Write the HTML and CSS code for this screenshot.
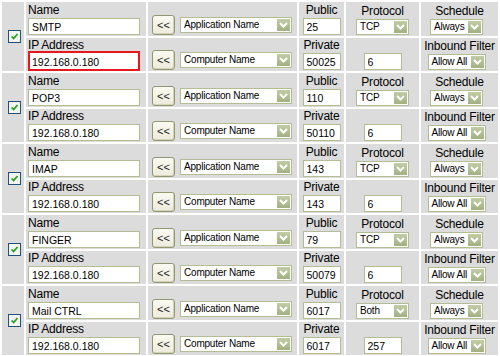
FILE: index.html
```html
<!DOCTYPE html>
<html lang="en">

<head>
    <title>Virtual Server List</title>
    <meta charset="UTF-8">
    <link rel="stylesheet" href="styles.css">
</head>

<body>
    <table class="rules">
        <colgroup>
            <col class="c-chk">
            <col class="c-name">
            <col class="c-pick">
            <col class="c-port">
            <col class="c-proto">
            <col class="c-sched">
        </colgroup>

        <!-- rule 1 -->
        <tr class="top">
            <td rowspan="2" class="chk-cell"><span class="chk"><svg viewBox="0 0 13 13"><path d="M3 6.5 L5.5 9 L10 3.5" /></svg></span></td>
            <td><span class="lbl">Name</span><input class="txt long" type="text" value="SMTP"></td>
            <td class="pick"><button type="button" class="copy">&lt;&lt;</button><span class="sel wide"><span class="sel-text">Application Name</span><span class="arrow"><svg viewBox="0 0 13 12"><path d="M3 4 L6.5 7.5 L10 4" /></svg></span></span></td>
            <td class="mid"><span class="lbl">Public</span><input class="txt port" type="text" value="25"></td>
            <td class="mid"><span class="lbl">Protocol</span><span class="sel small"><span class="sel-text">TCP</span><span class="arrow"><svg viewBox="0 0 13 12"><path d="M3 4 L6.5 7.5 L10 4" /></svg></span></span></td>
            <td class="mid sched"><span class="lbl">Schedule</span><span class="sel small"><span class="sel-text">Always</span><span class="arrow"><svg viewBox="0 0 13 12"><path d="M3 4 L6.5 7.5 L10 4" /></svg></span></span></td>
        </tr>
        <tr class="bottom">
            <td><span class="lbl">IP Address</span><input class="txt long marked" type="text" value="192.168.0.180"></td>
            <td class="pick"><button type="button" class="copy">&lt;&lt;</button><span class="sel wide"><span class="sel-text">Computer Name</span><span class="arrow"><svg viewBox="0 0 13 12"><path d="M3 4 L6.5 7.5 L10 4" /></svg></span></span></td>
            <td class="mid"><span class="lbl">Private</span><input class="txt port" type="text" value="50025"></td>
            <td class="mid"><input class="txt port" type="text" value="6"></td>
            <td class="mid sched"><span class="lbl">Inbound Filter</span><span class="sel filter"><span class="sel-text">Allow All</span><span class="arrow"><svg viewBox="0 0 13 12"><path d="M3 4 L6.5 7.5 L10 4" /></svg></span></span></td>
        </tr>

        <!-- rule 2 -->
        <tr class="top">
            <td rowspan="2" class="chk-cell"><span class="chk"><svg viewBox="0 0 13 13"><path d="M3 6.5 L5.5 9 L10 3.5" /></svg></span></td>
            <td><span class="lbl">Name</span><input class="txt long" type="text" value="POP3"></td>
            <td class="pick"><button type="button" class="copy">&lt;&lt;</button><span class="sel wide"><span class="sel-text">Application Name</span><span class="arrow"><svg viewBox="0 0 13 12"><path d="M3 4 L6.5 7.5 L10 4" /></svg></span></span></td>
            <td class="mid"><span class="lbl">Public</span><input class="txt port" type="text" value="110"></td>
            <td class="mid"><span class="lbl">Protocol</span><span class="sel small"><span class="sel-text">TCP</span><span class="arrow"><svg viewBox="0 0 13 12"><path d="M3 4 L6.5 7.5 L10 4" /></svg></span></span></td>
            <td class="mid sched"><span class="lbl">Schedule</span><span class="sel small"><span class="sel-text">Always</span><span class="arrow"><svg viewBox="0 0 13 12"><path d="M3 4 L6.5 7.5 L10 4" /></svg></span></span></td>
        </tr>
        <tr class="bottom">
            <td><span class="lbl">IP Address</span><input class="txt long" type="text" value="192.168.0.180"></td>
            <td class="pick"><button type="button" class="copy">&lt;&lt;</button><span class="sel wide"><span class="sel-text">Computer Name</span><span class="arrow"><svg viewBox="0 0 13 12"><path d="M3 4 L6.5 7.5 L10 4" /></svg></span></span></td>
            <td class="mid"><span class="lbl">Private</span><input class="txt port" type="text" value="50110"></td>
            <td class="mid"><input class="txt port" type="text" value="6"></td>
            <td class="mid sched"><span class="lbl">Inbound Filter</span><span class="sel filter"><span class="sel-text">Allow All</span><span class="arrow"><svg viewBox="0 0 13 12"><path d="M3 4 L6.5 7.5 L10 4" /></svg></span></span></td>
        </tr>

        <!-- rule 3 -->
        <tr class="top">
            <td rowspan="2" class="chk-cell"><span class="chk"><svg viewBox="0 0 13 13"><path d="M3 6.5 L5.5 9 L10 3.5" /></svg></span></td>
            <td><span class="lbl">Name</span><input class="txt long" type="text" value="IMAP"></td>
            <td class="pick"><button type="button" class="copy">&lt;&lt;</button><span class="sel wide"><span class="sel-text">Application Name</span><span class="arrow"><svg viewBox="0 0 13 12"><path d="M3 4 L6.5 7.5 L10 4" /></svg></span></span></td>
            <td class="mid"><span class="lbl">Public</span><input class="txt port" type="text" value="143"></td>
            <td class="mid"><span class="lbl">Protocol</span><span class="sel small"><span class="sel-text">TCP</span><span class="arrow"><svg viewBox="0 0 13 12"><path d="M3 4 L6.5 7.5 L10 4" /></svg></span></span></td>
            <td class="mid sched"><span class="lbl">Schedule</span><span class="sel small"><span class="sel-text">Always</span><span class="arrow"><svg viewBox="0 0 13 12"><path d="M3 4 L6.5 7.5 L10 4" /></svg></span></span></td>
        </tr>
        <tr class="bottom">
            <td><span class="lbl">IP Address</span><input class="txt long" type="text" value="192.168.0.180"></td>
            <td class="pick"><button type="button" class="copy">&lt;&lt;</button><span class="sel wide"><span class="sel-text">Computer Name</span><span class="arrow"><svg viewBox="0 0 13 12"><path d="M3 4 L6.5 7.5 L10 4" /></svg></span></span></td>
            <td class="mid"><span class="lbl">Private</span><input class="txt port" type="text" value="143"></td>
            <td class="mid"><input class="txt port" type="text" value="6"></td>
            <td class="mid sched"><span class="lbl">Inbound Filter</span><span class="sel filter"><span class="sel-text">Allow All</span><span class="arrow"><svg viewBox="0 0 13 12"><path d="M3 4 L6.5 7.5 L10 4" /></svg></span></span></td>
        </tr>

        <!-- rule 4 -->
        <tr class="top">
            <td rowspan="2" class="chk-cell"><span class="chk"><svg viewBox="0 0 13 13"><path d="M3 6.5 L5.5 9 L10 3.5" /></svg></span></td>
            <td><span class="lbl">Name</span><input class="txt long" type="text" value="FINGER"></td>
            <td class="pick"><button type="button" class="copy">&lt;&lt;</button><span class="sel wide"><span class="sel-text">Application Name</span><span class="arrow"><svg viewBox="0 0 13 12"><path d="M3 4 L6.5 7.5 L10 4" /></svg></span></span></td>
            <td class="mid"><span class="lbl">Public</span><input class="txt port" type="text" value="79"></td>
            <td class="mid"><span class="lbl">Protocol</span><span class="sel small"><span class="sel-text">TCP</span><span class="arrow"><svg viewBox="0 0 13 12"><path d="M3 4 L6.5 7.5 L10 4" /></svg></span></span></td>
            <td class="mid sched"><span class="lbl">Schedule</span><span class="sel small"><span class="sel-text">Always</span><span class="arrow"><svg viewBox="0 0 13 12"><path d="M3 4 L6.5 7.5 L10 4" /></svg></span></span></td>
        </tr>
        <tr class="bottom">
            <td><span class="lbl">IP Address</span><input class="txt long" type="text" value="192.168.0.180"></td>
            <td class="pick"><button type="button" class="copy">&lt;&lt;</button><span class="sel wide"><span class="sel-text">Computer Name</span><span class="arrow"><svg viewBox="0 0 13 12"><path d="M3 4 L6.5 7.5 L10 4" /></svg></span></span></td>
            <td class="mid"><span class="lbl">Private</span><input class="txt port" type="text" value="50079"></td>
            <td class="mid"><input class="txt port" type="text" value="6"></td>
            <td class="mid sched"><span class="lbl">Inbound Filter</span><span class="sel filter"><span class="sel-text">Allow All</span><span class="arrow"><svg viewBox="0 0 13 12"><path d="M3 4 L6.5 7.5 L10 4" /></svg></span></span></td>
        </tr>

        <!-- rule 5 -->
        <tr class="top">
            <td rowspan="2" class="chk-cell"><span class="chk"><svg viewBox="0 0 13 13"><path d="M3 6.5 L5.5 9 L10 3.5" /></svg></span></td>
            <td><span class="lbl">Name</span><input class="txt long" type="text" value="Mail CTRL"></td>
            <td class="pick"><button type="button" class="copy">&lt;&lt;</button><span class="sel wide"><span class="sel-text">Application Name</span><span class="arrow"><svg viewBox="0 0 13 12"><path d="M3 4 L6.5 7.5 L10 4" /></svg></span></span></td>
            <td class="mid"><span class="lbl">Public</span><input class="txt port" type="text" value="6017"></td>
            <td class="mid"><span class="lbl">Protocol</span><span class="sel small"><span class="sel-text">Both</span><span class="arrow"><svg viewBox="0 0 13 12"><path d="M3 4 L6.5 7.5 L10 4" /></svg></span></span></td>
            <td class="mid sched"><span class="lbl">Schedule</span><span class="sel small"><span class="sel-text">Always</span><span class="arrow"><svg viewBox="0 0 13 12"><path d="M3 4 L6.5 7.5 L10 4" /></svg></span></span></td>
        </tr>
        <tr class="bottom">
            <td><span class="lbl">IP Address</span><input class="txt long" type="text" value="192.168.0.180"></td>
            <td class="pick"><button type="button" class="copy">&lt;&lt;</button><span class="sel wide"><span class="sel-text">Computer Name</span><span class="arrow"><svg viewBox="0 0 13 12"><path d="M3 4 L6.5 7.5 L10 4" /></svg></span></span></td>
            <td class="mid"><span class="lbl">Private</span><input class="txt port" type="text" value="6017"></td>
            <td class="mid"><input class="txt port" type="text" value="257"></td>
            <td class="mid sched"><span class="lbl">Inbound Filter</span><span class="sel filter"><span class="sel-text">Allow All</span><span class="arrow"><svg viewBox="0 0 13 12"><path d="M3 4 L6.5 7.5 L10 4" /></svg></span></span></td>
        </tr>
    </table>
</body>

</html>
```

FILE: styles.css
```css
body {
    margin: 0;
    background: #ffffff;
    font-family: "Liberation Sans", Arial, sans-serif;
    overflow: hidden;
}

.rules {
    table-layout: fixed;
    width: 500px;
    border-collapse: separate;
    border-spacing: 2px;
}

.c-chk { width: 22px; }
.c-name { width: 120px; }
.c-pick { width: 149px; }
.c-port { width: 45px; }
.c-proto { width: 73px; }
.c-sched { width: 77px; }

.rules td {
    background: #dcdcdc;
    padding: 0 2px 1px 2px;
    vertical-align: bottom;
    white-space: nowrap;
    font-size: 0;
    line-height: 0;
}

/* heights are content-box; +1px bottom padding gives 34 / 33 */
.top td { height: 33px; }
.bottom td { height: 32px; }

.rules td.chk-cell {
    vertical-align: middle;
    padding: 0 0 0 6px;
}

.lbl {
    display: block;
    font-size: 12px;
    line-height: 15px;
    letter-spacing: -0.2px;
    color: #000;
}

.mid {
    text-align: center;
}

.sched .sel {
    margin-right: 6px;
}

/* text boxes */
.txt {
    box-sizing: border-box;
    height: 17px;
    margin: 0;
    padding: 1px 3px 0 3px;
    border: 1px solid #b2bd96;
    background: #fff;
    font-family: "Liberation Sans", Arial, sans-serif;
    font-size: 10.5px;
    line-height: 14px;
    color: #000;
    vertical-align: bottom;
}

.long {
    display: block;
    width: 112px;
}

.marked {
    height: 20px;
    margin: -2px 0 -1px 0;
    border: 2px solid #e8171c;
    padding: 1px 2px 0 2px;
}

.port {
    width: 38px;
    text-align: left;
}

/* copy button + fake select */
.rules td.pick {
    padding: 0 0 1px 4px;
}

.copy {
    box-sizing: border-box;
    width: 23px;
    height: 20px;
    margin: 0 5px 0 0;
    padding: 0;
    border: 1px solid #8f9870;
    border-radius: 3px;
    background: linear-gradient(#fbfaf1, #ecebdc);
    box-shadow: inset -1px -1px 0 #d6d3b8;
    font-family: "Liberation Sans", Arial, sans-serif;
    font-size: 11px;
    line-height: 18px;
    color: #222;
    vertical-align: bottom;
}

.sel {
    box-sizing: border-box;
    display: inline-flex;
    align-items: center;
    justify-content: space-between;
    height: 16px;
    padding: 0 1px 0 3px;
    border: 1px solid #b2bd96;
    background: #fff;
    font-size: 10px;
    line-height: 14px;
    color: #000;
    text-align: left;
    vertical-align: bottom;
}

.sel-text {
    letter-spacing: -0.2px;
}

.pick .sel {
    margin-bottom: 2px;
}

.wide { width: 112px; }
.small { width: 53px; }
.filter { width: 58px; }

.arrow {
    display: flex;
    flex: none;
    width: 13px;
    height: 12px;
    background: linear-gradient(#c2cca6, #a3b083);
}

.arrow svg {
    width: 13px;
    height: 12px;
}

.arrow path {
    fill: none;
    stroke: #fff;
    stroke-width: 2;
}

/* checkbox */
.chk {
    box-sizing: border-box;
    display: block;
    width: 13px;
    height: 13px;
    border: 1px solid #1c5180;
    background: #f4f4f0;
}

.chk svg {
    display: block;
    width: 11px;
    height: 11px;
}

.chk path {
    fill: none;
    stroke: #21a121;
    stroke-width: 2;
}
```
